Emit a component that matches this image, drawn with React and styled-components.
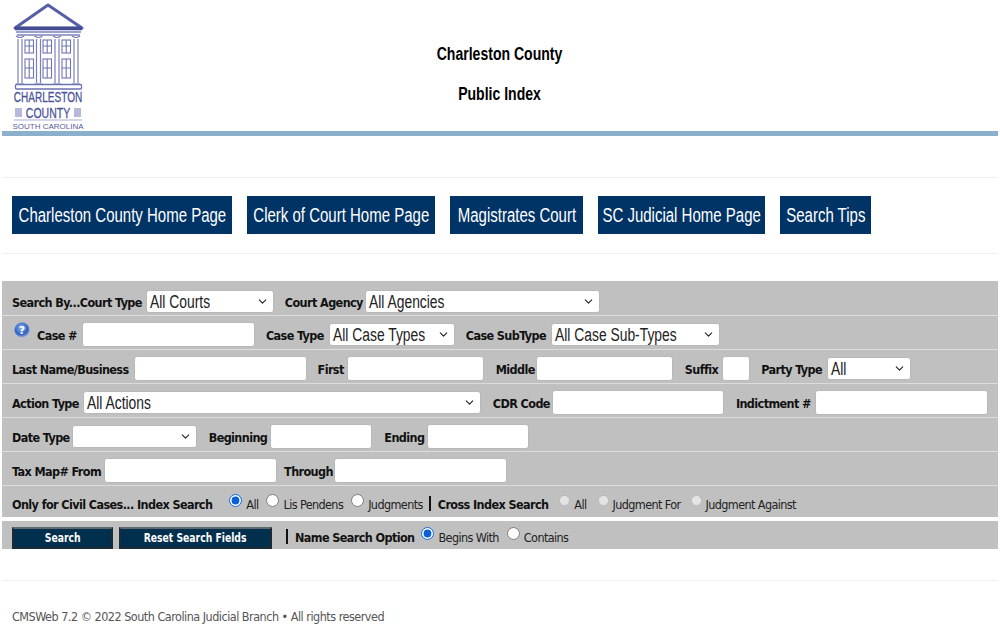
import React from "react";
import styled, { createGlobalStyle } from "styled-components";
import { ChevronDown } from "lucide-react";

const labelFont = `"DejaVu Sans", Verdana, sans-serif`;
const bodyFont = `"Liberation Sans", Arial, sans-serif`;

const GlobalStyle = createGlobalStyle`
  html, body {
    margin: 0;
    padding: 0;
    background: #ffffff;
  }
`;

const Page = styled.div`
  width: 996px;
  height: 625px;
  margin: 0 auto;
  overflow: hidden;
`;

const Header = styled.header`
  display: grid;
  grid-template-columns: 1fr auto 1fr;
  align-items: start;
  height: 131px;
`;

const Title = styled.div`
  grid-column: 2;
  padding-top: 44px;
  font-family: ${bodyFont};
  font-weight: 700;
  font-size: 18px;
  line-height: 20px;
  text-align: center;
  color: #000;
`;

const TitleLine = styled.div`
  margin-bottom: 20px;
  transform: scaleX(0.78);
`;

const Rule = styled.div`
  height: 5px;
  background: #8bb0cb;
`;

const Spacer = styled.div`
  height: ${(p) => p.$h}px;
  border-bottom: 1px solid #f0f0f0;
`;

const Nav = styled.nav`
  display: flex;
  gap: 15px;
  padding: 18px 0 0 10px;
  height: 76px;
  box-sizing: border-box;
  border-bottom: 1px solid #f0f0f0;
`;

const NavLink = styled.a`
  display: flex;
  align-items: center;
  justify-content: center;
  width: ${(p) => p.$w}px;
  height: 38px;
  background: #003366;
  color: #fff;
  font-family: ${bodyFont};
  font-size: 20px;
  white-space: nowrap;
`;

const NavText = styled.span`
  flex: none;
  transform: scaleX(0.75);
`;

const Panel = styled.form`
  margin-top: 27px;
  display: flex;
  flex-direction: column;
`;

const Row = styled.div`
  display: flex;
  align-items: center;
  height: ${(p) => p.$h || 30}px;
  padding: ${(p) => p.$pt || 3}px 0 0 10px;
  background: #c0c0c0;
  border-bottom: ${(p) => (p.$last ? "none" : "1px solid #dcdcdc")};
  white-space: nowrap;
`;

const Label = styled.label`
  display: inline-block;
  margin-left: ${(p) => p.$ml || 0}px;
  margin-right: ${(p) => p.$mr ?? 4}px;
  font-family: ${labelFont};
  font-stretch: condensed;
  font-weight: 700;
  font-size: 12.5px;
  letter-spacing: -0.6px;
  color: #111;
  transform: translateY(1px);
`;

const Input = styled.input`
  width: ${(p) => p.$w}px;
  height: 25px;
  box-sizing: border-box;
  padding: 0 4px;
  border: 1px solid #b8b8b8;
  border-radius: 3px;
  background: #fff;
`;

const SelectBox = styled.div`
  display: flex;
  align-items: center;
  justify-content: space-between;
  width: ${(p) => p.$w}px;
  height: 23px;
  box-sizing: border-box;
  padding: 0 4px 0 3px;
  border: 1px solid #b8b8b8;
  border-radius: 3px;
  background: #fff;
  color: #222;
  font-family: ${bodyFont};
  font-size: 18px;
  overflow: hidden;
`;

const SelectText = styled.span`
  flex: none;
  width: 0;
  transform: translateY(1px) scaleX(0.77);
  transform-origin: left center;
`;

const Radio = styled.input.attrs(() => ({ type: "radio" }))`
  width: ${(p) => (p.disabled ? 11 : 13)}px;
  height: ${(p) => (p.disabled ? 11 : 13)}px;
  margin: 0 4px 0 ${(p) => p.$ml}px;
  accent-color: #0a5fd8;
  transform: translateY(-3px);
`;

const RadioText = styled.span`
  font-family: ${labelFont};
  font-stretch: condensed;
  font-size: 12.5px;
  letter-spacing: -0.6px;
  color: #222;
  transform: translateY(1px);
`;

const Pipe = styled.span`
  margin-left: ${(p) => p.$ml}px;
  margin-right: ${(p) => p.$mr}px;
  width: 2px;
  height: 15px;
  background: #111;
`;

const Gap = styled.div`
  height: 4px;
`;

const Button = styled.button`
  display: flex;
  align-items: center;
  justify-content: center;
  align-self: flex-end;
  width: ${(p) => p.$w}px;
  height: 22px;
  margin-right: 6px;
  box-sizing: border-box;
  border: 2px solid #1d2a33;
  border-top-color: #5d6a70;
  background: #00304d;
  color: #fff;
  font-family: ${labelFont};
  font-stretch: condensed;
  font-weight: 700;
  font-size: 13px;
  padding: 0;
`;

const ButtonText = styled.span`
  flex: none;
  transform: translateY(-1px) scaleX(0.79);
`;

const Footer = styled.footer`
  padding: 28px 0 0 10px;
  font-family: ${labelFont};
  font-stretch: condensed;
  font-size: 12.5px;
  letter-spacing: -0.5px;
  color: #555;
`;

const HelpWrap = styled.svg`
  margin: 0 7px 0 2px;
  transform: translateY(-4px);
`;

const Select = ({ w, text }) => (
  <SelectBox $w={w}>
    <SelectText>{text}</SelectText>
    <ChevronDown size={13} strokeWidth={2} color="#222" />
  </SelectBox>
);

const logoText = `"Liberation Sans", sans-serif`;

const Logo = () => (
  <svg width="100" height="131" viewBox="2 0 100 131" fill="none">
    <path d="M48 5 15 28h67z" stroke="#565ea6" strokeWidth="3" strokeLinejoin="round" />
    <path d="M15 28.5h67" stroke="#434b94" strokeWidth="3.4" />
    <path d="M16 32h65M17 35h63" stroke="#7d84bc" strokeWidth="1.3" />
    {[20, 38.5, 57, 76].map((x) => (
      <g key={x} stroke="#7a80ba" strokeWidth="1.2">
        <path d={`M${x - 4} 36q4 3 8 0M${x - 2} 39v44M${x + 2} 39v44M${x - 4} 84h8`} />
      </g>
    ))}
    {[25, 43, 62].map((x) => (
      <g key={x} stroke="#6f76b4" strokeWidth="1.1">
        <rect x={x} y="40" width="8.5" height="13" />
        <path d={`M${x + 4.2} 40v13M${x} 46h8.5`} />
        <rect x={x} y="59" width="8.5" height="19" />
        <path d={`M${x + 4.2} 59v19M${x} 68h8.5`} />
      </g>
    ))}
    <rect x="15.5" y="84.5" width="66" height="4.5" rx="1" stroke="#6b72b2" strokeWidth="1.3" />
    <text transform="translate(48 102) scale(0.67 1)" textAnchor="middle" fill="#4a5299" stroke="#4a5299" strokeWidth="0.3" fontFamily={logoText} fontSize="15">CHARLESTON</text>
    <rect x="15" y="108" width="7" height="9" fill="#b5b9da" />
    <rect x="74" y="108" width="7" height="9" fill="#b5b9da" />
    <text transform="translate(48 118) scale(0.75 1)" textAnchor="middle" fill="#4a5299" stroke="#4a5299" strokeWidth="0.3" fontFamily={logoText} fontSize="14">COUNTY</text>
    <path d="M14 120h68" stroke="#a9aed4" />
    <text x="48" y="129" textAnchor="middle" fill="#565d9c" fontFamily={logoText} fontSize="8">SOUTH CAROLINA</text>
  </svg>
);

const HelpIcon = () => (
  <HelpWrap width="16" height="17" viewBox="0 0 16 17">
    <defs>
      <radialGradient id="helpBall" cx="45%" cy="35%" r="65%">
        <stop offset="0%" stopColor="#8fb4ec" />
        <stop offset="70%" stopColor="#2f5fc4" />
        <stop offset="100%" stopColor="#9fb4dc" />
      </radialGradient>
    </defs>
    <circle cx="8" cy="8" r="7.5" fill="url(#helpBall)" />
    <text x="8" y="12" textAnchor="middle" fill="#fff" fontFamily="DejaVu Sans, sans-serif" fontWeight="700" fontSize="11">?</text>
  </HelpWrap>
);

const navLinks = [
  ["Charleston County Home Page", 220],
  ["Clerk of Court Home Page", 188],
  ["Magistrates Court", 133],
  ["SC Judicial Home Page", 167],
  ["Search Tips", 91],
];

export default () => {
  return (
    <Page>
      <GlobalStyle />
      <Header>
        <Logo />
        <Title>
          <TitleLine>Charleston County</TitleLine>
          <TitleLine>Public Index</TitleLine>
        </Title>
      </Header>
      <Rule />
      <Spacer $h={41} />
      <Nav>
        {navLinks.map(([text, w]) => (
          <NavLink key={text} $w={w}>
            <NavText>{text}</NavText>
          </NavLink>
        ))}
      </Nav>

      <Panel onSubmit={(e) => e.preventDefault()}>
        <Row $h={28} $pt={6}>
          <Label>Search By...Court Type</Label>
          <Select w={128} text="All Courts" />
          <Label $ml={11} $mr={2}>Court Agency</Label>
          <Select w={235} text="All Agencies" />
        </Row>
        <Row>
          <HelpIcon />
          <Label $mr={5}>Case #</Label>
          <Input $w={173} />
          <Label $ml={11} $mr={5}>Case Type</Label>
          <Select w={126} text="All Case Types" />
          <Label $ml={11} $mr={5}>Case SubType</Label>
          <Select w={169} text="All Case Sub-Types" />
        </Row>
        <Row>
          <Label $mr={5}>Last Name/Business</Label>
          <Input $w={173} />
          <Label $ml={11} $mr={3}>First</Label>
          <Input $w={137} />
          <Label $ml={12} $mr={1}>Middle</Label>
          <Input $w={137} />
          <Label $ml={12} $mr={4}>Suffix</Label>
          <Input $w={28} />
          <Label $ml={11} $mr={5}>Party Type</Label>
          <Select w={84} text="All" />
        </Row>
        <Row>
          <Label>Action Type</Label>
          <Select w={398} text="All Actions" />
          <Label $ml={12} $mr={2}>CDR Code</Label>
          <Input $w={172} />
          <Label $ml={12}>Indictment #</Label>
          <Input $w={173} />
        </Row>
        <Row>
          <Label $mr={2}>Date Type</Label>
          <Select w={125} />
          <Label $ml={12} $mr={3}>Beginning</Label>
          <Input $w={102} />
          <Label $ml={12} $mr={3}>Ending</Label>
          <Input $w={102} />
        </Row>
        <Row>
          <Label $mr={3}>Tax Map# From</Label>
          <Input $w={173} />
          <Label $ml={7} $mr={1}>Through</Label>
          <Input $w={173} />
        </Row>
        <Row $h={28} $last>
          <Label>Only for Civil Cases... Index Search</Label>
          <Radio name="idx" $ml={13} defaultChecked />
          <RadioText>All</RadioText>
          <Radio name="idx" $ml={8} />
          <RadioText>Lis Pendens</RadioText>
          <Radio name="idx" $ml={8} />
          <RadioText>Judgments</RadioText>
          <Pipe $ml={6} $mr={7} />
          <Label>Cross Index Search</Label>
          <Radio name="cross" $ml={7} disabled />
          <RadioText>All</RadioText>
          <Radio name="cross" $ml={11} disabled />
          <RadioText>Judgment For</RadioText>
          <Radio name="cross" $ml={10} disabled />
          <RadioText>Judgment Against</RadioText>
        </Row>
        <Gap />
        <Row $h={25} $last>
          <Button $w={101}><ButtonText>Search</ButtonText></Button>
          <Button $w={153}><ButtonText>Reset Search Fields</ButtonText></Button>
          <Pipe $ml={8} $mr={7} />
          <Label>Name Search Option</Label>
          <Radio name="opt" $ml={3} defaultChecked />
          <RadioText>Begins With</RadioText>
          <Radio name="opt" $ml={8} />
          <RadioText>Contains</RadioText>
        </Row>
      </Panel>

      <Spacer $h={31} />
      <Footer>CMSWeb 7.2 © 2022 South Carolina Judicial Branch • All rights reserved</Footer>
    </Page>
  );
};
